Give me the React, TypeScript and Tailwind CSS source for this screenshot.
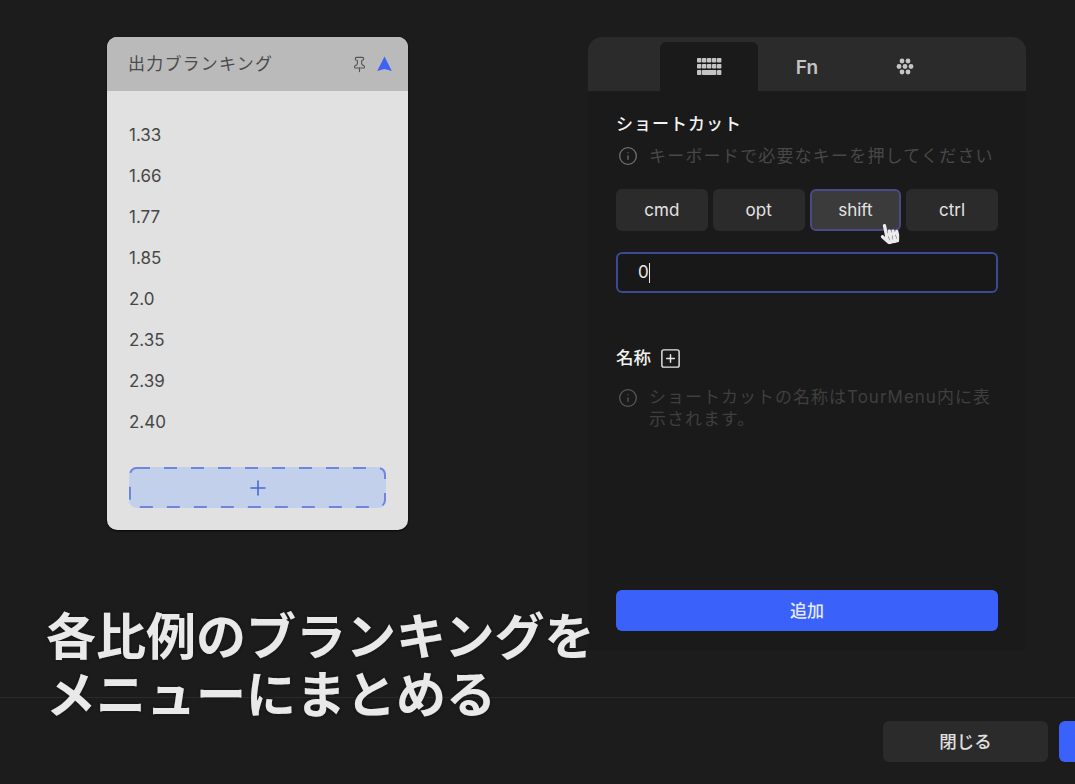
import { Info, Pin, Plus, SquarePlus } from "lucide-react";
import { FaHandPointer } from "react-icons/fa";

const FONT = "font-['Inter','Noto_Sans_CJK_JP',sans-serif]";
const ratios = ["1.33", "1.66", "1.77", "1.85", "2.0", "2.35", "2.39", "2.40"];

function KeyboardIcon() {
  return (
    <svg width="25" height="18" viewBox="0 0 25 18" fill="#c4c4c4">
      {[0, 5, 10, 15, 20].map((x) => (
        <rect key={x} x={x} y="0" width="4.4" height="4.6" rx="0.8" />
      ))}
      {[0, 5, 10, 15, 20].map((x) => (
        <rect key={x} x={x} y="6" width="4.4" height="4.6" rx="0.8" />
      ))}
      <rect x="0" y="12" width="4.4" height="5" rx="0.8" />
      <rect x="5" y="12" width="14.4" height="5" rx="0.8" />
      <rect x="20" y="12" width="4.4" height="5" rx="0.8" />
    </svg>
  );
}

function DotsIcon() {
  const dots = [
    [7, 2.5],
    [13, 2.5],
    [4, 8],
    [10, 8],
    [16, 8],
    [7, 13.5],
    [13, 13.5],
  ];
  return (
    <svg width="20" height="17" viewBox="0 0 20 16" fill="#c4c4c4">
      {dots.map(([cx, cy]) => (
        <circle key={`${cx}-${cy}`} cx={cx} cy={cy} r="2.4" />
      ))}
    </svg>
  );
}

function RatioMenu() {
  return (
    <div className="w-[301px] h-[493px] rounded-[10px] bg-[#e1e1e1] overflow-hidden flex flex-col shadow-[0_1px_2px_rgba(0,0,0,0.8)]">
      <div className="h-[54px] bg-[#bababa] flex items-center pl-[21px] pr-[16px] shrink-0">
        <span className="flex-1 text-[17px] leading-[26px] tracking-[1.2px] text-[#4b4b4b]">出力ブランキング</span>
        <Pin size={17} strokeWidth={1.6} className="text-[#555555] mr-[9px]" />
        <svg width="15" height="16" viewBox="0 0 15 16" fill="#3f62f5">
          <path d="M7.5 0.5 L14.8 15 L7.5 13 L0.2 15 Z" />
        </svg>
      </div>
      <div className="pt-[24px] pl-[22px] flex flex-col">
        {ratios.map((r) => (
          <div key={r} className="h-[41px] flex items-center text-[17px] text-[#474747]">
            {r}
          </div>
        ))}
      </div>
      <div className="relative mx-[22px] mt-[24px] h-[41px] rounded-[8px] bg-[#c2d0ec] flex items-center justify-center">
        <svg className="absolute inset-0" width="257" height="41" viewBox="0 0 257 41" fill="none">
          <rect x="1" y="1" width="255" height="39" rx="7" stroke="#6f86dd" strokeWidth="2" strokeDasharray="13 14" />
        </svg>
        <Plus size={24} strokeWidth={1.6} className="text-[#4a66dc]" />
      </div>
    </div>
  );
}

function ShortcutPanel() {
  return (
    <div className="w-[438px] h-[613px] rounded-t-[14px] bg-[#1a1a1a] overflow-hidden flex flex-col">
      <div className="h-[54px] bg-[#2b2b2b] pl-[72px] flex items-end shrink-0">
        <div className="w-[98px] h-[49px] bg-[#1a1a1a] rounded-t-[6px] flex items-center justify-center">
          <KeyboardIcon />
        </div>
        <div className="w-[98px] h-[49px] flex items-center justify-center text-[19px] font-semibold text-[#c4c4c4] pt-[3px]">Fn</div>
        <div className="w-[98px] h-[49px] flex items-center justify-center">
          <DotsIcon />
        </div>
      </div>
      <div className="px-[28px] flex flex-col flex-1">
        <div className="mt-[20px] text-[17px] leading-[26px] tracking-[1px] font-medium text-[#f2f2f2]">ショートカット</div>
        <div className="mt-[6px] flex items-center gap-[11px] pl-[2px] text-[17px] leading-[26px] tracking-[1.2px] text-[#484848] whitespace-nowrap">
          <Info size={20} strokeWidth={1.6} className="text-[#6f6f6f] shrink-0" />
          キーボードで必要なキーを押してください
        </div>
        <div className="mt-[20px] grid grid-cols-4 gap-[5px] h-[42px] text-[17px] text-[#e4e4e4]">
          <div className="rounded-[6px] bg-[#2b2b2b] flex items-center justify-center pt-[2px]">cmd</div>
          <div className="rounded-[6px] bg-[#2b2b2b] flex items-center justify-center pt-[2px]">opt</div>
          <div className="relative rounded-[6px] bg-[#3b3b3b] border-2 border-[#494a86] flex items-center justify-center pt-[2px]">
            shift
            <FaHandPointer className="absolute left-[67px] top-[32px] text-[21px] text-[#ececec] -rotate-12" />
          </div>
          <div className="rounded-[6px] bg-[#2b2b2b] flex items-center justify-center pt-[2px]">ctrl</div>
        </div>
        <div className="mt-[21px] h-[41px] rounded-[6px] border-2 border-[#3a4a93] bg-[#181818] pl-[20px] flex items-center text-[17px] text-[#e8e8e8]">
          0<span className="w-px h-[20px] bg-[#e8e8e8]" />
        </div>
        <div className="mt-[52px] flex items-center gap-[8px] text-[17.5px] leading-[26px] font-medium text-[#f2f2f2]">
          名称
          <SquarePlus size={23} strokeWidth={1.5} className="text-[#e6e6e6]" />
        </div>
        <div className="mt-[15px] flex gap-[11px] pl-[2px] text-[17px] leading-[22px] text-[#3f3f3f]">
          <Info size={20} strokeWidth={1.6} className="text-[#575757] shrink-0 mt-[2px]" />
          <div className="tracking-[1px] whitespace-nowrap">
            <div>ショートカットの名称はTourMenu内に表</div>
            <div>示されます。</div>
          </div>
        </div>
        <div className="mt-auto mb-[19px] h-[41px] rounded-[6px] bg-[#3a62fb] flex items-center justify-center text-[17px] font-medium text-[#e6ebff] pt-[2px]">
          追加
        </div>
      </div>
    </div>
  );
}

export default function App() {
  return (
    <div className={`${FONT} relative w-[1075px] h-[784px] overflow-hidden bg-[#1c1c1c] flex flex-col`}>
      <div className="h-[697px] shrink-0 pt-[37px] pl-[107px] flex items-start gap-[180px]">
        <RatioMenu />
        <ShortcutPanel />
      </div>
      <div className="flex-1 border-t border-[#2a2a2a] pl-[883px] pt-[23px] flex items-start gap-[11px]">
        <div className="w-[165px] h-[41px] shrink-0 rounded-[6px] bg-[#2b2b2b] flex items-center justify-center text-[17.5px] font-medium text-[#e0e0e0] pt-[2px]">
          閉じる
        </div>
        <div className="w-[165px] h-[41px] shrink-0 rounded-[6px] bg-[#3a62fb]" />
      </div>
      <div className="absolute left-[46px] top-[608px] text-[50px] leading-[58px] font-bold text-[#e9e9e9] whitespace-nowrap [text-shadow:0_0_3px_rgba(0,0,0,0.9),0_0_1px_rgba(255,255,255,0.5)]">
        各比例のブランキングを
        <br />
        メニューにまとめる
      </div>
    </div>
  );
}
